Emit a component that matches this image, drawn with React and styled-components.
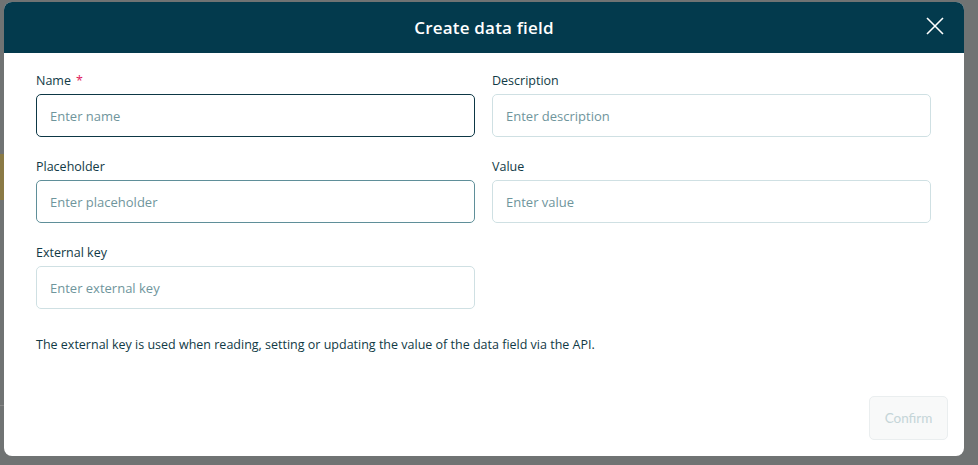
import React from "react";
import styled, { createGlobalStyle } from "styled-components";

const Global = createGlobalStyle`
  html, body { margin: 0; padding: 0; }
  body { width: 978px; height: 465px; overflow: hidden; background: #6f7272; font-family: "Open Sans", sans-serif; }
`;

const Backdrop = styled.div`
  position: relative;
  width: 978px;
  height: 465px;
  background: #707373;
`;
const BgHint = styled.div`
  position: absolute;
  left: 0;
  top: ${p => p.$top}px;
  width: 6px;
  height: ${p => p.$h}px;
  background: ${p => p.$c};
`;
const Modal = styled.div`
  position: absolute;
  left: 4px;
  top: 2px;
  width: 960px;
  height: 454px;
  background: #fff;
  border-radius: 8px;
  overflow: hidden;
  display: flex;
  flex-direction: column;
`;
const Header = styled.div`
  height: 51px;
  background: #033a4d;
  display: flex;
  align-items: center;
  justify-content: center;
  position: relative;
  color: #fff;
  font-size: 17px;
  font-weight: 600;
  letter-spacing: 0.2px;
`;
const Close = styled.button`
  position: absolute;
  right: 20px;
  top: 15px;
  background: none;
  border: 0;
  padding: 0;
  cursor: pointer;
  display: flex;
`;
const Body = styled.div`
  padding: 20px 33px 0 32px;
  display: flex;
  flex-direction: column;
  flex: 1;
`;
const Grid = styled.div`
  display: grid;
  grid-template-columns: 439px 439px;
  column-gap: 17px;
  row-gap: 22px;
`;
const Field = styled.div`
  display: flex;
  flex-direction: column;
  gap: 5px;
`;
const Label = styled.label`
  font-size: 12.5px;
  color: #113a46;
  height: 16px;
  line-height: 16px;
`;
const Star = styled.span`
  color: #e0195a;
  margin-left: 5px;
`;
const Input = styled.input`
  box-sizing: border-box;
  height: 43px;
  width: 100%;
  border-radius: 5px;
  border: 1px solid ${p => p.$focus ? "#0d3745" : p.$teal ? "#5f8f99" : "#cfe0e3"};
  padding: 0 13px;
  font-family: "Open Sans", sans-serif;
  font-size: 13px;
  color: #113a46;
  outline: none;
  &::placeholder { color: #6f959c; }
`;
const Help = styled.p`
  margin: 27px 0 0;
  font-size: 12.5px;
  color: #113a46;
`;
const Footer = styled.div`
  margin-top: auto;
  display: flex;
  justify-content: flex-end;
  padding: 0 16px 16px 0;
`;
const Confirm = styled.button`
  width: 79px;
  height: 44px;
  border-radius: 5px;
  border: 1px solid #eaeeef;
  background: #f8f9f9;
  color: #c5d5d8;
  font-family: Lato, sans-serif;
  font-size: 13.5px;
`;

export default function App() {
  return (
    <Backdrop>
      <Global />
      <BgHint $top={154} $h={46} $c="#8a7a45" />
      <BgHint $top={405} $h={1} $c="#888" />
      <Modal>
        <Header>
          Create data field
          <Close aria-label="close">
            <svg width="18" height="18" viewBox="0 0 18 18">
              <path d="M1 1L17 17M17 1L1 17" stroke="#fff" strokeWidth="1.6" />
            </svg>
          </Close>
        </Header>
        <Body>
          <Grid>
            <Field>
              <Label>Name<Star>*</Star></Label>
              <Input $focus placeholder="Enter name" />
            </Field>
            <Field>
              <Label>Description</Label>
              <Input placeholder="Enter description" />
            </Field>
            <Field>
              <Label>Placeholder</Label>
              <Input $teal placeholder="Enter placeholder" />
            </Field>
            <Field>
              <Label>Value</Label>
              <Input placeholder="Enter value" />
            </Field>
            <Field>
              <Label>External key</Label>
              <Input placeholder="Enter external key" />
            </Field>
          </Grid>
          <Help>The external key is used when reading, setting or updating the value of the data field via the API.</Help>
        </Body>
        <Footer>
          <Confirm disabled>Confirm</Confirm>
        </Footer>
      </Modal>
    </Backdrop>
  );
}
